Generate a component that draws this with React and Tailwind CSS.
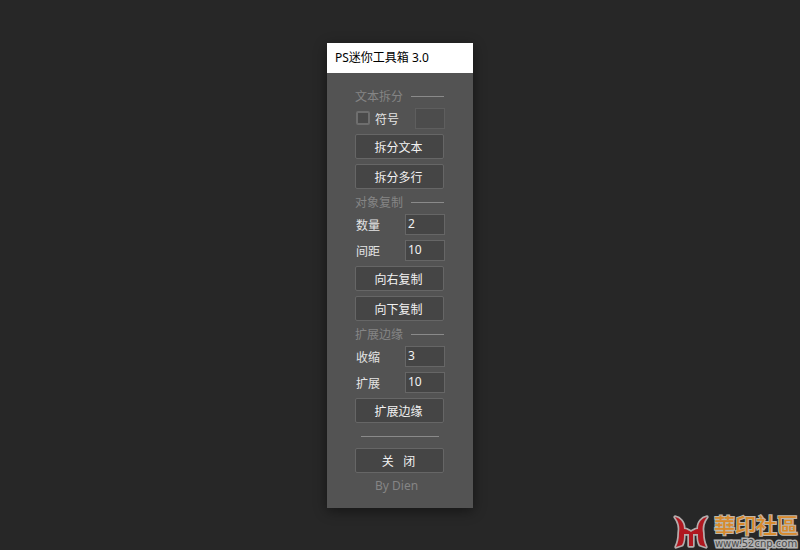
function SectionLabel({ children }) {
  return (
    <div className="flex h-[15px] items-center gap-2 text-[#858585]">
      <h2 className="shrink-0 pt-1 leading-4">{children}</h2>
      <span className="mt-0.5 mr-px h-px flex-1 bg-[#8a8a8a]" />
    </div>
  )
}

function PanelButton({ children }) {
  return (
    <button
      type="button"
      className="mr-px h-[25px] rounded-xs border border-[#666] bg-[#454545] pt-[3px] pr-0.5 leading-4 whitespace-pre text-[#f2f2f2] hover:bg-[#4d4d4d]"
    >
      {children}
    </button>
  )
}

function NumberRow({ id, label, value }) {
  return (
    <div className="flex h-[21px] items-center justify-between">
      <label htmlFor={id} className="pt-[3px] pl-px leading-4">{label}</label>
      <input
        id={id}
        type="text"
        defaultValue={value}
        className="h-[21px] w-10 border border-[#666] bg-[#454545] px-0.5 pb-0.5 leading-4 text-[#f2f2f2] outline-none"
      />
    </div>
  )
}

function Watermark() {
  return (
    <div className="absolute right-0.5 bottom-0 flex items-end gap-1">
      <svg width="38" height="36" viewBox="0 0 38 36" aria-hidden="true">
        <g stroke="#b5adad" strokeWidth="3.4" strokeLinejoin="round" fill="#b5adad">
          <path d="M3 3C8 4 12 8 12 15C15 15 17 17 19 18C21 17 23 15 26 15C26 8 30 4 35 3C31 8 30 13 31 19C31 25 32 29 34 33L28 31C26 28 26 24 26 20H12C12 24 12 28 10 31L4 33C6 29 7 25 7 19C8 13 7 8 3 3Z" />
          <path d="M17 20H21V32H17Z" />
        </g>
        <g fill="#b01820">
          <path d="M3 3C8 4 12 8 12 15C15 15 17 17 19 18C21 17 23 15 26 15C26 8 30 4 35 3C31 8 30 13 31 19C31 25 32 29 34 33L28 31C26 28 26 24 26 20H12C12 24 12 28 10 31L4 33C6 29 7 25 7 19C8 13 7 8 3 3Z" />
          <path d="M17 20H21V32H17Z" />
        </g>
      </svg>
      <div className="flex flex-col items-center">
        <span className="font-['Noto_Sans_CJK_TC',sans-serif] text-[21px] leading-7 font-medium text-[#d98a2b] [paint-order:stroke_fill] [-webkit-text-stroke:2px_#bdb6aa]">
          華印社區
        </span>
        <span className="font-['DejaVu_Sans',sans-serif] text-[10px] leading-3 text-[#4a4a4a] [paint-order:stroke_fill] [-webkit-text-stroke:3px_#b4b4b4]">
          www.52cnp.com
        </span>
      </div>
    </div>
  )
}

export default function App() {
  return (
    <div className="relative flex min-h-screen items-center justify-center bg-[#272727] font-['Noto_Sans','Noto_Sans_CJK_SC',sans-serif] text-xs text-[#e4e4e4]">
      <main className="w-[146px] bg-[#535353] shadow-[0_3px_12px_rgba(0,0,0,0.45)]">
        <header className="flex h-[30px] items-center bg-white px-2 text-black">
          <h1 className="leading-4">PS迷你工具箱 3.0</h1>
        </header>

        <form className="flex flex-col gap-[5px] px-7 py-[15px]">
          <SectionLabel>文本拆分</SectionLabel>
          <div className="flex h-[21px] items-center justify-between">
            <label className="flex items-center gap-[5px] pl-px leading-4">
              <input
                type="checkbox"
                className="size-[14px] appearance-none rounded-xs border-2 border-[#6e6e6e] bg-[#4a4a4a] checked:bg-[#8a8a8a]"
              />
              <span className="pt-[3px]">符号</span>
            </label>
            <input
              type="text"
              aria-label="符号"
              disabled
              className="h-[21px] w-[30px] border border-[#5e5e5e] bg-[#4c4c4c]"
            />
          </div>
          <PanelButton>拆分文本</PanelButton>
          <PanelButton>拆分多行</PanelButton>

          <SectionLabel>对象复制</SectionLabel>
          <NumberRow id="count" label="数量" value="2" />
          <NumberRow id="spacing" label="间距" value="10" />
          <PanelButton>向右复制</PanelButton>
          <PanelButton>向下复制</PanelButton>

          <SectionLabel>扩展边缘</SectionLabel>
          <NumberRow id="shrink" label="收缩" value="3" />
          <NumberRow id="expand" label="扩展" value="10" />
          <PanelButton>扩展边缘</PanelButton>

          <div className="flex h-[15px] items-center px-1.5">
            <hr className="mt-0.5 h-px flex-1 border-0 bg-[#8a8a8a]" />
          </div>
          <PanelButton>{'关   闭'}</PanelButton>
          <p className="h-[15px] pl-5 leading-4 text-[#858585]">By Dien</p>
        </form>
      </main>
      <Watermark />
    </div>
  )
}
